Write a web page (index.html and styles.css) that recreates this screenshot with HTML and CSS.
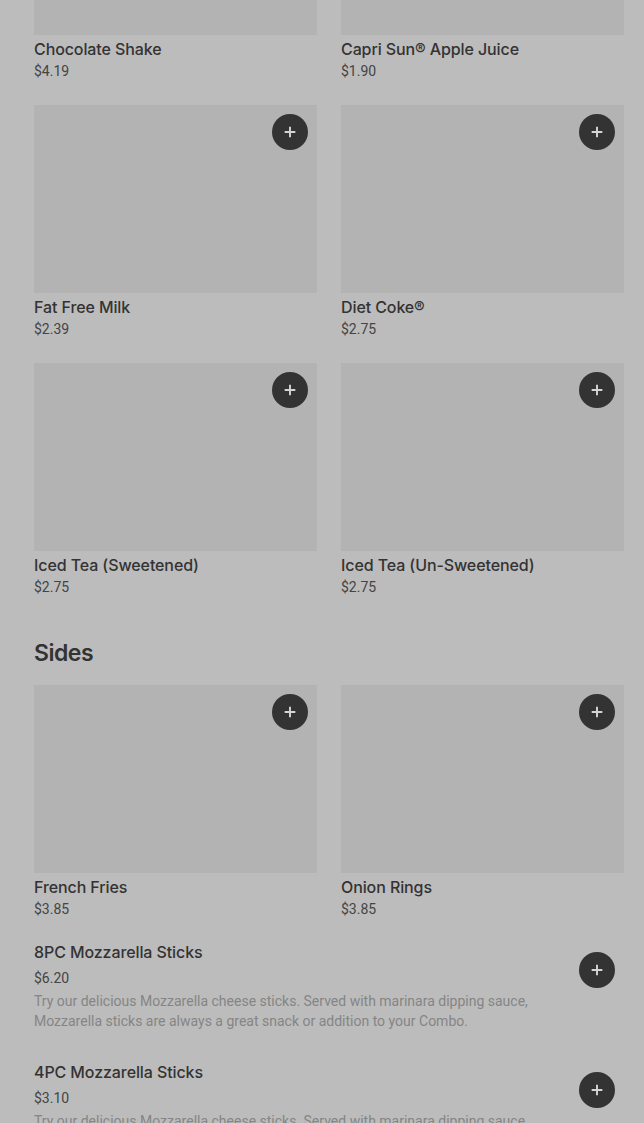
FILE: index.html
```html
<!DOCTYPE html>
<html lang="en">
<head>
<meta charset="utf-8">
<title>Menu</title>
<link rel="stylesheet" href="styles.css">
</head>
<body>
<main class="page">
  <section class="grid">
    <article class="card">
      <div class="thumb thumb-cut"></div>
      <h3 class="name">Chocolate Shake</h3>
      <p class="price">$4.19</p>
    </article>
    <article class="card">
      <div class="thumb thumb-cut"></div>
      <h3 class="name">Capri Sun® Apple Juice</h3>
      <p class="price">$1.90</p>
    </article>
    <article class="card">
      <div class="thumb"><button class="add" aria-label="Add"><svg viewBox="0 0 16 16" width="14" height="14"><path d="M8 3v10M3 8h10" stroke="currentColor" stroke-width="2.2" stroke-linecap="square"/></svg></button></div>
      <h3 class="name">Fat Free Milk</h3>
      <p class="price">$2.39</p>
    </article>
    <article class="card">
      <div class="thumb"><button class="add" aria-label="Add"><svg viewBox="0 0 16 16" width="14" height="14"><path d="M8 3v10M3 8h10" stroke="currentColor" stroke-width="2.2" stroke-linecap="square"/></svg></button></div>
      <h3 class="name">Diet Coke®</h3>
      <p class="price">$2.75</p>
    </article>
    <article class="card">
      <div class="thumb"><button class="add" aria-label="Add"><svg viewBox="0 0 16 16" width="14" height="14"><path d="M8 3v10M3 8h10" stroke="currentColor" stroke-width="2.2" stroke-linecap="square"/></svg></button></div>
      <h3 class="name">Iced Tea (Sweetened)</h3>
      <p class="price">$2.75</p>
    </article>
    <article class="card">
      <div class="thumb"><button class="add" aria-label="Add"><svg viewBox="0 0 16 16" width="14" height="14"><path d="M8 3v10M3 8h10" stroke="currentColor" stroke-width="2.2" stroke-linecap="square"/></svg></button></div>
      <h3 class="name">Iced Tea (Un-Sweetened)</h3>
      <p class="price">$2.75</p>
    </article>
  </section>

  <h2 class="section-title">Sides</h2>

  <section class="grid">
    <article class="card">
      <div class="thumb"><button class="add" aria-label="Add"><svg viewBox="0 0 16 16" width="14" height="14"><path d="M8 3v10M3 8h10" stroke="currentColor" stroke-width="2.2" stroke-linecap="square"/></svg></button></div>
      <h3 class="name">French Fries</h3>
      <p class="price">$3.85</p>
    </article>
    <article class="card">
      <div class="thumb"><button class="add" aria-label="Add"><svg viewBox="0 0 16 16" width="14" height="14"><path d="M8 3v10M3 8h10" stroke="currentColor" stroke-width="2.2" stroke-linecap="square"/></svg></button></div>
      <h3 class="name">Onion Rings</h3>
      <p class="price">$3.85</p>
    </article>
  </section>

  <section class="list">
    <article class="row">
      <div class="row-text">
        <h3 class="row-name">8PC Mozzarella Sticks</h3>
        <p class="row-price">$6.20</p>
        <p class="desc">Try our delicious Mozzarella cheese sticks. Served with marinara dipping sauce, Mozzarella sticks are always a great snack or addition to your Combo.</p>
      </div>
      <button class="add add-row" aria-label="Add"><svg viewBox="0 0 16 16" width="14" height="14"><path d="M8 3v10M3 8h10" stroke="currentColor" stroke-width="2.2" stroke-linecap="square"/></svg></button>
    </article>
    <article class="row">
      <div class="row-text">
        <h3 class="row-name">4PC Mozzarella Sticks</h3>
        <p class="row-price">$3.10</p>
        <p class="desc">Try our delicious Mozzarella cheese sticks. Served with marinara dipping sauce, Mozzarella sticks are always a great snack or addition to your Combo.</p>
      </div>
      <button class="add add-row" aria-label="Add"><svg viewBox="0 0 16 16" width="14" height="14"><path d="M8 3v10M3 8h10" stroke="currentColor" stroke-width="2.2" stroke-linecap="square"/></svg></button>
    </article>
  </section>
</main>
</body>
</html>
```

FILE: styles.css
```css
* { box-sizing: border-box; }

html, body {
  margin: 0;
  padding: 0;
  background: #bcbcbc;
  height: 1123px;
  overflow: hidden;
}

body {
  font-family: "Inter", "Roboto", "Liberation Sans", sans-serif;
  color: #303030;
}

.page {
  padding: 0 20px 0 34px;
}

.grid {
  display: grid;
  grid-template-columns: 283px 283px;
  column-gap: 24px;
  row-gap: 24px;
}

.card {
  margin: 0;
}

.thumb {
  position: relative;
  height: 188px;
  background: #b3b3b3;
}

.thumb-cut {
  height: 35px;
}

.name {
  margin: 4px 0 0;
  font-size: 16px;
  line-height: 20px;
  font-weight: 500;
  color: #333333;
  letter-spacing: -0.1px;
}

.price {
  margin: 2px 0 0;
  font-family: "Roboto", "Liberation Sans", sans-serif;
  font-size: 14px;
  line-height: 20px;
  color: #444444;
}

.add {
  display: flex;
  align-items: center;
  justify-content: center;
  width: 36px;
  height: 36px;
  padding: 0;
  border: 0;
  border-radius: 50%;
  background: #333333;
  color: #d4d4d4;
}

.thumb .add {
  position: absolute;
  top: 9px;
  right: 9px;
}

.section-title {
  margin: 40px 0 16px;
  font-size: 23px;
  line-height: 32px;
  font-weight: 600;
  color: #333333;
  letter-spacing: -0.5px;
}

.list {
  padding-top: 21px;
}

.row {
  display: flex;
  align-items: flex-start;
  gap: 36px;
  padding-right: 9px;
  margin-bottom: 29px;
}

.row-text {
  flex: 1;
}

.row-name {
  margin: 0;
  font-size: 16px;
  line-height: 24px;
  font-weight: 500;
  color: #333333;
  letter-spacing: -0.1px;
}

.row-price {
  margin: 4px 0 0;
  font-family: "Roboto", "Liberation Sans", sans-serif;
  font-size: 14px;
  line-height: 20px;
  color: #444444;
}

.desc {
  margin: 3px 0 0;
  font-family: "Roboto", "Liberation Sans", sans-serif;
  font-size: 14px;
  line-height: 20px;
  color: #858585;
}

.add-row {
  margin-top: 12px;
  flex: none;
}
```
